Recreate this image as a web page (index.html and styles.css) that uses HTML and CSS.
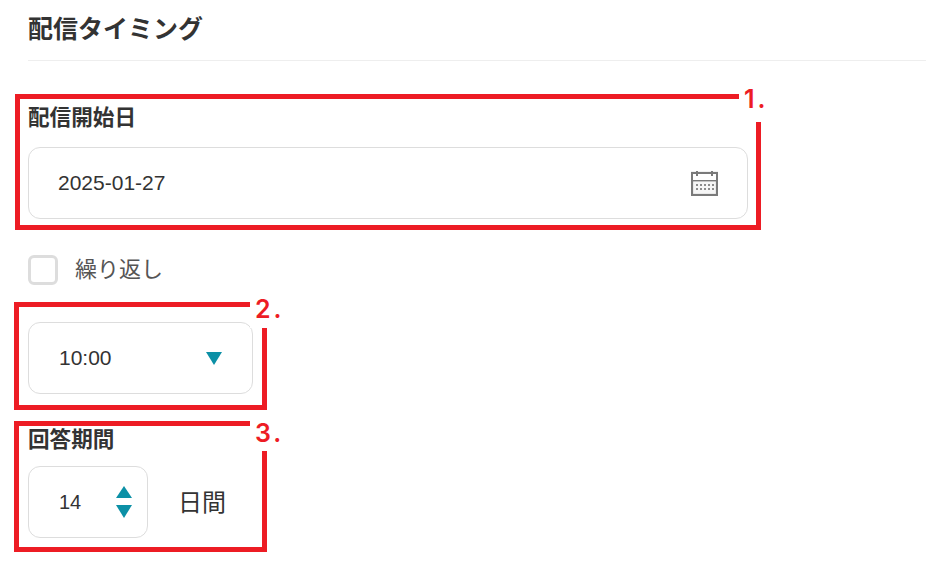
FILE: index.html
```html
<!DOCTYPE html>
<html lang="ja">
<head>
    <meta charset="UTF-8">
    <meta name="viewport" content="width=device-width, initial-scale=1.0">
    <title>配信タイミング</title>
    <link rel="stylesheet" href="styles.css">
</head>
<body>
    <div class="page">
        <h2 class="title">配信タイミング</h2>

        <div class="field field-date">
            <div class="label">配信開始日</div>
            <div class="input input-date">
                <span>2025-01-27</span>
                <svg class="calendar" width="27" height="25" viewBox="0 0 27 25">
                    <rect x="1" y="2" width="25" height="22" fill="#f6f6f6" stroke="#7a7a7a" stroke-width="2.2"/>
                    <rect x="2" y="3" width="23" height="6" fill="#fff"/>
                    <rect x="1" y="9" width="25" height="1.4" fill="#7a7a7a"/>
                    <rect x="5" y="0" width="2" height="5" fill="#7a7a7a"/>
                    <rect x="20" y="0" width="2" height="5" fill="#7a7a7a"/>
                    <g fill="#8c8c8c">
                        <rect x="5" y="13" width="2" height="2"/><rect x="9" y="13" width="2" height="2"/><rect x="13" y="13" width="2" height="2"/><rect x="17" y="13" width="2" height="2"/><rect x="21" y="13" width="2" height="2"/>
                        <rect x="5" y="17" width="2" height="2"/><rect x="9" y="17" width="2" height="2"/><rect x="13" y="17" width="2" height="2"/><rect x="17" y="17" width="2" height="2"/><rect x="21" y="17" width="2" height="2"/>
                    </g>
                </svg>
            </div>
        </div>

        <label class="repeat">
            <span class="checkbox"></span>
            <span class="repeat-text">繰り返し</span>
        </label>

        <div class="input input-time">
            <span>10:00</span>
            <span class="arrow-down"></span>
        </div>

        <div class="label label-period">回答期間</div>
        <div class="period">
            <div class="input input-days">
                <span>14</span>
                <span class="spinner">
                    <span class="arrow-up"></span>
                    <span class="arrow-down"></span>
                </span>
            </div>
            <span class="unit">日間</span>
        </div>

        <!-- red annotations on top of the form -->
        <div class="mark mark-1"><span class="mark-num">1.</span></div>
        <div class="mark mark-2"><span class="mark-num">2.</span></div>
        <div class="mark mark-3"><span class="mark-num">3.</span></div>
    </div>
</body>
</html>
```

FILE: styles.css
```css
* {
    box-sizing: border-box;
}
body {
    margin: 0;
    background-color: #fff;
    color: #333;
    font-family: "Liberation Sans", "Noto Sans CJK JP", sans-serif;
}
.page {
    position: relative;
    height: 567px;
    padding-left: 28px;
    overflow: hidden;
}
.title {
    margin: 0;
    height: 61px;
    padding-top: 12px;
    font-size: 25px;
    line-height: 34px;
    font-weight: bold;
    border-bottom: 1px solid #eee;
}
.label {
    font-size: 21.6px;
    line-height: 30px;
    font-weight: bold;
}
.field-date {
    margin-top: 42px;
    width: 720px;
}
.input {
    display: flex;
    align-items: center;
    justify-content: space-between;
    height: 72px;
    border: 1px solid #ddd;
    border-radius: 12px;
    background-color: #fff;
    font-size: 21px;
}
.input-date {
    margin-top: 14px;
    padding: 0 29px 0 29px;
}
.repeat {
    display: flex;
    align-items: center;
    gap: 17px;
    margin-top: 36px;
    height: 30px;
    font-size: 22px;
    color: #555;
}
.repeat-text {
    margin-top: -6px;
}
.checkbox {
    width: 30px;
    height: 30px;
    border: 3px solid #ddd;
    border-radius: 6px;
}
.input-time {
    width: 225px;
    margin-top: 37px;
    padding: 0 30px 0 30px;
}
.arrow-down,
.arrow-up {
    display: block;
    width: 0;
    height: 0;
    border-left: 8px solid transparent;
    border-right: 8px solid transparent;
}
.arrow-down {
    border-top: 13px solid #0c90a6;
}
.arrow-up {
    border-bottom: 12px solid #0c90a6;
}
.label-period {
    margin-top: 31px;
}
.period {
    display: flex;
    align-items: center;
    gap: 30px;
    margin-top: 11px;
}
.input-days {
    width: 120px;
    padding: 0 15px 0 30px;
    font-size: 20px;
}
.spinner {
    display: flex;
    flex-direction: column;
    gap: 7px;
}
.unit {
    margin-top: -3px;
    font-size: 24px;
}
.mark {
    position: absolute;
    border: 5px solid #ed1c24;
}
.mark-1 {
    left: 15px;
    top: 94px;
    width: 746px;
    height: 136px;
}
.mark-2 {
    left: 14px;
    top: 302px;
    width: 253px;
    height: 108px;
}
.mark-3 {
    left: 14px;
    top: 421px;
    width: 253px;
    height: 131px;
}
/* white patch cuts the corner of the box open */
.mark-num {
    position: absolute;
    top: -10px;
    padding-left: 5px;
    background-color: #fff;
    color: #ed1c24;
    font-family: Inter, sans-serif;
    font-size: 25px;
    line-height: 20px;
    font-weight: 600;
    letter-spacing: 3px;
}
.mark-1 .mark-num {
    right: -10px;
    width: 27px;
    height: 33px;
    padding-top: 0;
}
.mark-2 .mark-num {
    right: -23px;
    width: 35px;
    height: 31px;
    padding-top: 2px;
}
.mark-3 .mark-num {
    right: -23px;
    width: 35px;
    height: 35px;
    padding-top: 7px;
}
```
